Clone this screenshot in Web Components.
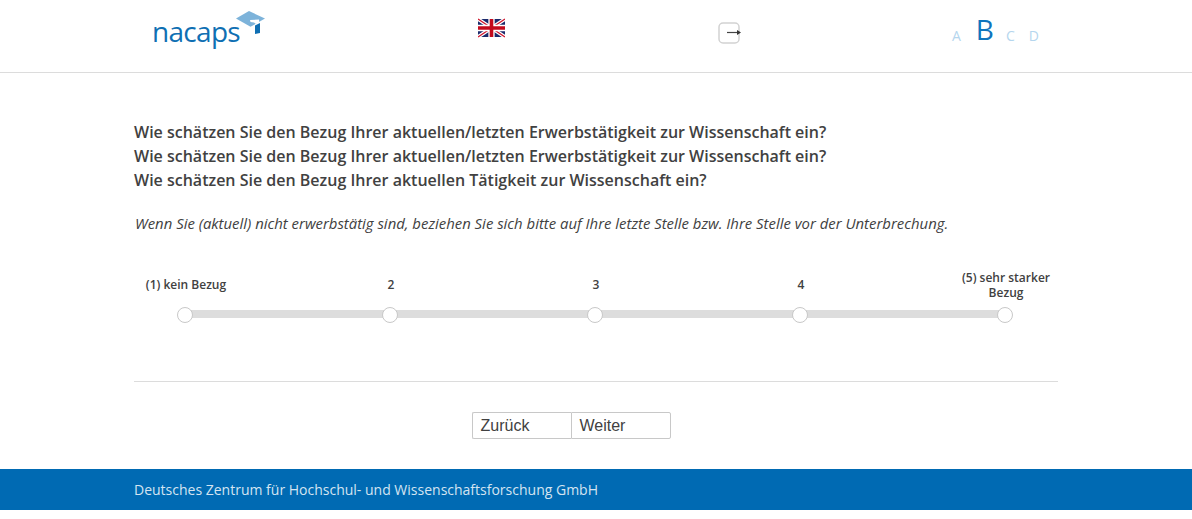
<!DOCTYPE html>
<html lang="de">
<head>
<meta charset="utf-8">
<title>nacaps</title>
<style>
  html, body { margin: 0; background: #fff; }
  body { font-family: "Open Sans", sans-serif; color: #414141; }
</style>
</head>
<body>
<survey-header></survey-header>
<survey-main>
  <survey-question>
    <span>Wie schätzen Sie den Bezug Ihrer aktuellen/letzten Erwerbstätigkeit zur Wissenschaft ein?</span>
    <span>Wie schätzen Sie den Bezug Ihrer aktuellen/letzten Erwerbstätigkeit zur Wissenschaft ein?</span>
    <span>Wie schätzen Sie den Bezug Ihrer aktuellen Tätigkeit zur Wissenschaft ein?</span>
    <span slot="hint">Wenn Sie (aktuell) nicht erwerbstätig sind, beziehen Sie sich bitte auf Ihre letzte Stelle bzw. Ihre Stelle vor der Unterbrechung.</span>
  </survey-question>
  <survey-scale>
    <scale-point>(1) kein Bezug</scale-point>
    <scale-point>2</scale-point>
    <scale-point>3</scale-point>
    <scale-point>4</scale-point>
    <scale-point>(5) sehr starker Bezug</scale-point>
  </survey-scale>
  <survey-nav></survey-nav>
</survey-main>
<survey-footer>Deutsches Zentrum für Hochschul- und Wissenschaftsforschung GmbH</survey-footer>

<script>
class SurveyHeader extends HTMLElement {
    constructor() {
        super();
        this.attachShadow({ mode: 'open' }).innerHTML = `<style>
            :host { display: block; height: 72px; border-bottom: 1px solid #dcdcdc; }
            .bar { display: grid; grid-template-columns: 326px 240px 234px 1fr; height: 72px; padding-left: 152px; box-sizing: border-box; }
            .logo { display: flex; align-items: flex-start; }
            .word { font-size: 28px; line-height: 38px; margin-top: 12px; color: #0f6fb3; letter-spacing: -.7px; }
            .mark { margin: 11px 0 0 -5px; }
            .flag { margin-top: 18px; }
            .exit { margin-top: 22px; }
            .sizes { display: flex; align-items: flex-start; font-size: 14px; line-height: 20px; color: #b5d6ee; }
            .sizes span { display: block; margin: 26px 0 0 0; }
            .sizes .a { margin-right: 15px; }
            .sizes .b { font-size: 28px; line-height: 38px; font-weight: 500; color: #0f74bd; margin: 10px 12px 0 0; }
            .sizes .c { margin-right: 14px; }
        </style>
        <div class="bar">
            <div class="logo">
                <span class="word">nacaps</span>
                <svg class="mark" width="30" height="24" viewBox="0 0 30 24">
                    <path d="M1 7.600 14 0 30 7.600 15.500 15.700Z" fill="#7db3da"/>
                    <path d="M15 9 24 8.500V11.500L21 13 19 11.500 15.500 11Z" fill="#fff"/>
                    <path d="M20 14.500 25 12V22L20 23Z" fill="#0f6fb3"/>
                </svg>
            </div>
            <svg class="flag" width="27" height="20" viewBox="0 0 60 40">
                <rect width="60" height="40" fill="#1a2a6c"/>
                <path d="M0 0 60 40M60 0 0 40" stroke="#fff" stroke-width="8"/>
                <path d="M0 0 60 40M60 0 0 40" stroke="#cf142b" stroke-width="3"/>
                <path d="M30 0V40M0 20H60" stroke="#fff" stroke-width="14"/>
                <path d="M30 0V40M0 20H60" stroke="#c30a1d" stroke-width="8"/>
            </svg>
            <svg class="exit" width="24" height="22" viewBox="0 0 24 22">
                <rect x="1" y="1" width="20" height="20" rx="4" fill="#fff" stroke="#d2d2d2" stroke-width="1.500"/>
                <path d="M9 10.500H20" stroke="#444" stroke-width="1.200"/>
                <path d="M19 8 23 10.500 19 13Z" fill="#333"/>
            </svg>
            <div class="sizes">
                <span class="a">A</span><span class="b">B</span><span class="c">C</span><span>D</span>
            </div>
        </div>`;
    }
}

class SurveyMain extends HTMLElement {
    constructor() {
        super();
        this.attachShadow({ mode: 'open' }).innerHTML = `<style>
            :host { display: block; padding: 47px 134px 30px; }
        </style><slot></slot>`;
    }
}

class SurveyQuestion extends HTMLElement {
    constructor() {
        super();
        this.attachShadow({ mode: 'open' }).innerHTML = `<style>
            :host { display: block; }
            .q { display: flex; flex-direction: column; font-size: 16px; line-height: 24px; font-weight: 600; color: #414141; }
            .hint { margin: 19px 0 0 1px; font-size: 14.900px; line-height: 24px; font-style: italic; color: #414141; }
        </style>
        <div class="q"><slot></slot></div>
        <div class="hint"><slot name="hint"></slot></div>`;
    }
}

class SurveyScale extends HTMLElement {
    constructor() {
        super();
        this.attachShadow({ mode: 'open' }).innerHTML = `<style>
            :host { display: block; position: relative; margin-top: 34px; height: 112px; }
            .points { display: grid; grid-template-columns: repeat(5, 100px); column-gap: 105px; padding-left: 1px; }
            .rail { position: absolute; left: 51px; top: 41px; width: 820px; height: 8px; background: #dddddd; }
        </style>
        <div class="rail"></div>
        <div class="points"><slot></slot></div>`;
    }
}

class ScalePoint extends HTMLElement {
    constructor() {
        super();
        this.attachShadow({ mode: 'open' }).innerHTML = `<style>
            :host { display: flex; flex-direction: column; align-items: center; position: relative; }
            .label { display: flex; align-items: center; height: 30px; margin-left: 2px; font-size: 12px; line-height: 15px; font-weight: 600; text-align: center; color: #414141; }
            :host(:last-child) .label { margin-top: 1px; margin-bottom: -1px; }
            .dot { width: 14px; height: 14px; margin-top: 8px; border: 1px solid #c8c8c8; border-radius: 50%; background: #fff; }
        </style>
        <div class="label"><slot></slot></div>
        <div class="dot"></div>`;
    }
}

class SurveyNav extends HTMLElement {
    constructor() {
        super();
        this.attachShadow({ mode: 'open' }).innerHTML = `<style>
            :host { display: block; border-top: 1px solid #dcdcdc; padding-top: 30px; }
            .group { display: flex; padding-left: 338px; }
            button { height: 27px; padding: 0 0 0 7.500px; box-sizing: border-box; text-align: left; background: #fff; color: #414141; font: 16px "Liberation Sans", sans-serif; border: 1px solid #c8c8c8; }
            button:first-child { width: 99px; border-radius: 2px 0 0 2px; border-right: 0; }
            button:last-child { width: 100px; border-radius: 0 2px 2px 0; }
        </style>
        <div class="group"><button>Zurück</button><button>Weiter</button></div>`;
    }
}

class SurveyFooter extends HTMLElement {
    constructor() {
        super();
        this.attachShadow({ mode: 'open' }).innerHTML = `<style>
            :host { display: block; height: 41px; padding-left: 134px; background: #006ab3; color: #d4e4f1; font-size: 14px; line-height: 41px; }
        </style><slot></slot>`;
    }
}

customElements.define('survey-header', SurveyHeader);
customElements.define('survey-main', SurveyMain);
customElements.define('survey-question', SurveyQuestion);
customElements.define('survey-scale', SurveyScale);
customElements.define('scale-point', ScalePoint);
customElements.define('survey-nav', SurveyNav);
customElements.define('survey-footer', SurveyFooter);
</script>
</body>
</html>
